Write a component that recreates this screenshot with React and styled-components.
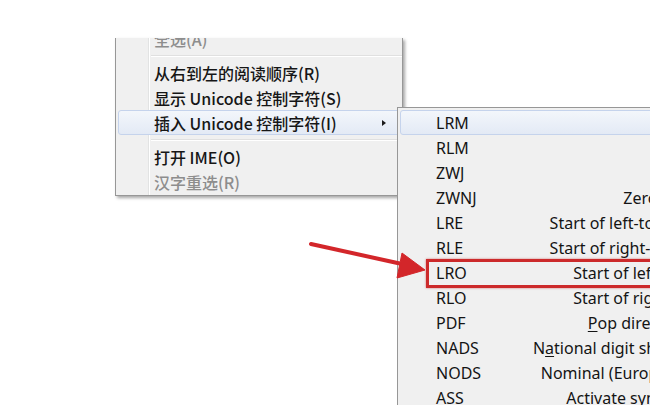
import React from "react";
import styled, { createGlobalStyle, css } from "styled-components";

const GlobalStyle = createGlobalStyle`
  html, body {
    margin: 0;
    padding: 0;
    background: #ffffff;
    overflow: hidden;
  }
  body {
    font-family: "Noto Sans CJK SC", "Noto Sans", sans-serif;
  }
`;

const Desktop = styled.div`
  position: relative;
  width: 658px;
  height: 405px;
  overflow: hidden;
  background: #ffffff;
`;

const MainMenu = styled.div`
  position: absolute;
  left: 115px;
  top: 38px;
  width: 286px;
  height: 157px;
  overflow: hidden;
  background-color: #f0f0f0;
  background-image: linear-gradient(
    to right,
    transparent 32px,
    #e2e3e3 32px,
    #e2e3e3 33px,
    #ffffff 33px,
    #ffffff 34px,
    transparent 34px
  );
  border: 1px solid #979797;
  border-top: none;
  box-shadow: 2px 2px 3px rgba(0, 0, 0, 0.35);
`;

const MenuList = styled.div`
  display: flex;
  flex-direction: column;
  margin-top: -12px;
`;

const Item = styled.div`
  display: flex;
  align-items: center;
  height: 25px;
  margin: 0 2px;
  padding: 0 13px 0 35px;
  box-sizing: border-box;
  font-size: 16px;
  font-weight: 500;
  color: ${(p) => (p.disabled ? "#8d8d8d" : "#161616")};
  border: 1px solid transparent;
  border-radius: 3px;
  white-space: nowrap;
  ${(p) =>
    p.active &&
    css`
      background: linear-gradient(#f3f6fb, #e3eaf5);
      border-color: #c5d3ec;
    `}
`;

const Separator = styled.div`
  height: 9px;
  margin-left: 35px;
  display: flex;
  flex-direction: column;
  justify-content: center;
  &::before {
    content: "";
    display: block;
    height: 1px;
    background: #e0e0e0;
    border-bottom: 1px solid #ffffff;
  }
`;

const SubArrow = styled.span`
  margin-left: auto;
  width: 0;
  height: 0;
  border-left: 4px solid #1b1b1b;
  border-top: 3.5px solid transparent;
  border-bottom: 3.5px solid transparent;
`;

const SubMenu = styled.div`
  position: absolute;
  left: 397px;
  top: 107px;
  width: 253px;
  height: 310px;
  overflow: hidden;
  background: #f0f0f0;
  border-left: 1px solid #979797;
  border-top: 1px solid #979797;
  box-sizing: border-box;
  padding-top: 2px;
`;

const SubList = styled.div`
  display: flex;
  flex-direction: column;
  width: 411px;
`;

const SubItem = styled.div`
  position: relative;
  display: flex;
  align-items: center;
  justify-content: space-between;
  height: 25px;
  margin: 0 2px;
  padding: 0 20px 0 35px;
  box-sizing: border-box;
  font-family: "Noto Sans", "Noto Sans CJK SC", sans-serif;
  font-size: 16px;
  color: #141414;
  border: 1px solid transparent;
  border-radius: 3px;
  white-space: nowrap;
  ${(p) =>
    p.active &&
    css`
      background: linear-gradient(#f3f6fb, #e3eaf5);
      border-color: #c5d3ec;
    `}
  ${(p) =>
    p.marked &&
    css`
      &::after {
        content: "";
        position: absolute;
        left: 25px;
        top: -2px;
        right: -20px;
        bottom: -4px;
        border: 3px solid #cc2a2b;
        box-shadow: 0 0 2px rgba(190, 30, 30, 0.6);
      }
    `}
`;

const Code = styled.span``;

const Desc = styled.span`
  text-align: right;
  u {
    text-decoration: underline;
    text-underline-offset: 2px;
  }
`;

const Pointer = styled.svg`
  position: absolute;
  left: 300px;
  top: 232px;
  overflow: visible;
`;

const subItems = [
  { code: "LRM", desc: null },
  { code: "RLM", desc: null },
  { code: "ZWJ", desc: null },
  { code: "ZWNJ", desc: "Zero width non-joiner" },
  { code: "LRE", desc: "Start of left-to-right embedding" },
  { code: "RLE", desc: "Start of right-to-left embedding" },
  { code: "LRO", desc: "Start of left-to-right override" },
  { code: "RLO", desc: "Start of right-to-left override" },
  {
    code: "PDF",
    desc: (
      <>
        <u>P</u>op directional formatting
      </>
    ),
  },
  {
    code: "NADS",
    desc: (
      <>
        N<u>a</u>tional digit shapes substitution
      </>
    ),
  },
  { code: "NODS", desc: "Nominal (European) digit shapes" },
  { code: "ASS", desc: "Activate symmetric swapping" },
];

export default function App() {
  return (
    <>
      <GlobalStyle />
      <Desktop>
        <MainMenu>
          <MenuList>
            <Item disabled>全选(A)</Item>
            <Separator />
            <Item>从右到左的阅读顺序(R)</Item>
            <Item>显示 Unicode 控制字符(S)</Item>
            <Item active>
              插入 Unicode 控制字符(I)
              <SubArrow />
            </Item>
            <Separator />
            <Item>打开 IME(O)</Item>
            <Item disabled>汉字重选(R)</Item>
          </MenuList>
        </MainMenu>

        <SubMenu>
          <SubList>
            {subItems.map((it, i) => (
              <SubItem key={it.code} active={i === 0} marked={it.code === "LRO"}>
                <Code>{it.code}</Code>
                <Desc>{it.desc}</Desc>
              </SubItem>
            ))}
          </SubList>
        </SubMenu>

        <Pointer width="130" height="55" viewBox="0 0 130 55">
          <defs>
            <filter id="soft" x="-20%" y="-50%" width="140%" height="200%">
              <feGaussianBlur stdDeviation="0.6" />
            </filter>
          </defs>
          <g filter="url(#soft)" fill="#d3262a" stroke="#d3262a">
            <line x1="11" y1="12" x2="102" y2="32" strokeWidth="4" strokeLinecap="round" />
            <polygon points="125,38 102,21 97,46" strokeWidth="1" strokeLinejoin="round" />
          </g>
        </Pointer>
      </Desktop>
    </>
  );
}
